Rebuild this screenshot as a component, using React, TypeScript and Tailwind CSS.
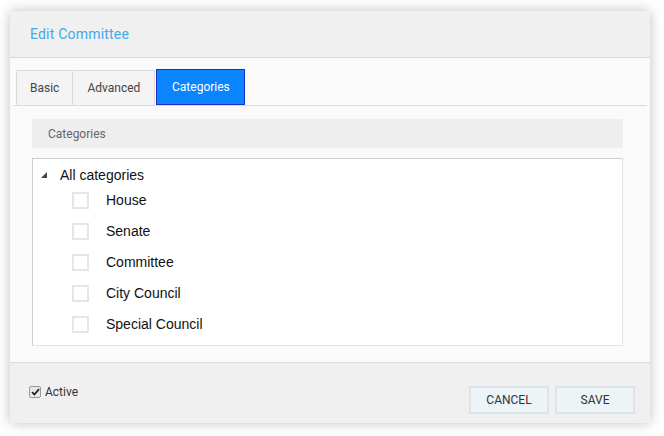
import * as React from "react";

const items = ["House", "Senate", "Committee", "City Council", "Special Council"];

export default function App() {
  const ui = { fontFamily: "Roboto, 'Noto Sans', sans-serif" };
  const arial = { fontFamily: "'Liberation Sans', Arial, sans-serif" };

  return (
    <div className="w-[664px] h-[436px] bg-white pt-[11px] pl-[10px]" style={ui}>
      <div className="w-[640px] h-[412px] flex flex-col bg-[#fafafa] shadow-[0_0_12px_rgba(0,0,0,0.25)]">
        {/* Header */}
        <div className="h-[47px] bg-[#f0f0f0] border-b border-[#d9d9d9] flex items-center px-5">
          <span className="text-[14px] text-[#45a8e8] tracking-[0.2px]">Edit Committee</span>
        </div>

        {/* Tabs */}
        <div className="pt-[11px] px-[3px]">
          <div className="flex items-end border-b border-[#dcdcdc] pl-[3px]">
            <div className="h-[35px] px-[13px] flex items-center border border-b-0 border-[#d9d9d9] bg-[#f4f4f4] text-[12px] text-[#444] rounded-t-[2px]">
              Basic
            </div>
            <div className="h-[35px] w-[82px] flex items-center justify-center border border-l-0 border-b-0 border-[#d9d9d9] bg-[#f4f4f4] text-[12px] text-[#444]">
              Advanced
            </div>
            <div className="h-[36px] w-[89px] ml-[1px] flex items-center justify-center border border-[#1a2fc9] bg-[#0a84ff] text-[12px] text-white">
              Categories
            </div>
          </div>
        </div>

        {/* Content */}
        <div className="flex-1 pl-[22px] pr-[27px] pt-[13px]">
          <div className="h-[29px] bg-[#eeeeee] flex items-center px-4 text-[12px] text-[#666]">Categories</div>
          <div className="mt-[10px] h-[188px] bg-white border border-[#cccccc] border-r-[#e4e4e4] border-b-[#e4e4e4] pt-[7px]" style={arial}>
            <div className="flex items-center h-[18px] pl-[8px]">
              <svg width="6" height="6" viewBox="0 0 6 6" className="mr-[13px]">
                <polygon points="6,0 6,6 0,6" fill="#444" />
              </svg>
              <span className="text-[14px] text-[#111]">All categories</span>
            </div>
            <div className="flex flex-col pt-[1px]">
              {items.map((it) => (
                <div key={it} className="flex items-center h-[31px] pl-[39px]">
                  <div className="w-[17px] h-[17px] border-2 border-[#e6e6e6] bg-white" />
                  <span className="ml-[17px] text-[14px] text-[#111]">{it}</span>
                </div>
              ))}
            </div>
          </div>
        </div>

        {/* Footer */}
        <div className="h-[61px] bg-[#f0f0f0] border-t border-[#d9d9d9] flex items-center justify-between pl-[19px] pr-[15px]">
          <label className="flex items-center gap-[4px] text-[12px] text-[#333] mt-[-3px]">
            <span className="w-[12px] h-[12px] rounded-[2px] border border-[#999] bg-[#e8e8e8] flex items-center justify-center">
              <svg width="9" height="8" viewBox="0 0 9 8">
                <path d="M1 4.2 L3.4 6.5 L8 1.2" stroke="#222" strokeWidth="1.8" fill="none" />
              </svg>
            </span>
            Active
          </label>
          <div className="flex gap-[6px] mt-[14px]">
            <button className="w-[80px] h-[28px] bg-[#edf4f7] border-2 border-[#dde3e6] text-[12px] text-[#333]">CANCEL</button>
            <button className="w-[80px] h-[28px] bg-[#edf4f7] border-2 border-[#dde3e6] text-[12px] text-[#333]">SAVE</button>
          </div>
        </div>
      </div>
    </div>
  );
}
